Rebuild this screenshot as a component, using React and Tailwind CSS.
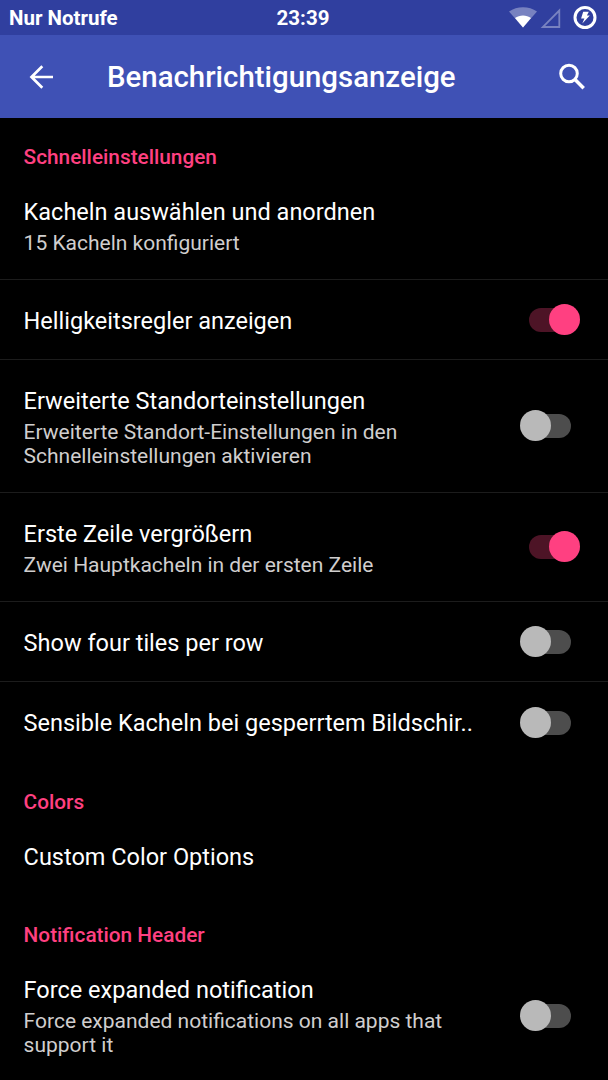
const sections = [
  {
    title: 'Schnelleinstellungen',
    items: [
      { title: 'Kacheln auswählen und anordnen', summary: ['15 Kacheln konfiguriert'], height: 'h-[109px]' },
      { title: 'Helligkeitsregler anzeigen', enabled: true, height: 'h-[80px]' },
      {
        title: 'Erweiterte Standorteinstellungen',
        summary: ['Erweiterte Standort-Einstellungen in den', 'Schnelleinstellungen aktivieren'],
        enabled: false,
        height: 'h-[133.4px]',
      },
      { title: 'Erste Zeile vergrößern', summary: ['Zwei Hauptkacheln in der ersten Zeile'], enabled: true, height: 'h-[109px]' },
      { title: 'Show four tiles per row', enabled: false, height: 'h-[80px]' },
      { title: 'Sensible Kacheln bei gesperrtem Bildschir..', enabled: false, height: 'h-[80.6px]' },
    ],
  },
  {
    title: 'Colors',
    items: [{ title: 'Custom Color Options', height: 'h-[80px]' }],
  },
  {
    title: 'Notification Header',
    items: [
      {
        title: 'Force expanded notification',
        summary: ['Force expanded notifications on all apps that', 'support it'],
        enabled: false,
        height: 'h-[134px]',
      },
    ],
  },
];

function StatusBar() {
  return (
    <div className="grid h-[35px] grid-cols-3 items-center bg-[#303f9f] pl-[9px] pr-[11px] text-[20.5px] font-bold leading-none">
      <span className="whitespace-nowrap pt-0.5">Nur Notrufe</span>
      <span className="pt-0.5 text-center">23:39</span>
      <div className="flex items-center justify-end">
        {/* WLAN */}
        <svg className="h-[22px] w-[28px]" viewBox="0 0 28 22">
          <path d="M0 4.500C8-1.200 20-1.200 28 4.500L14 20.500Z" fill="#fff" fillOpacity=".35" />
          <path d="M6 11C10.500 7.500 17.500 7.500 22 11L14 20.500Z" fill="#fff" />
        </svg>
        {/* Mobilfunk */}
        <svg className="ml-[3px] h-[22px] w-[21px]" viewBox="0 0 21 22">
          <path d="M19.300 3.500V20H2.800Z" fill="none" stroke="#fff" strokeOpacity=".35" strokeWidth="1.800" />
        </svg>
        {/* Akku */}
        <svg className="ml-[12px] h-[24px] w-[24px]" viewBox="0 0 24 24">
          <circle cx="12" cy="11.500" r="10" fill="none" stroke="#fff" strokeWidth="3" />
          <path d="M10.200 5.700H15.800L13.900 9.500H16.800L9.300 17.500L11.400 12.500H8.100Z" fill="#fff" />
        </svg>
      </div>
    </div>
  );
}

function Toolbar() {
  return (
    <header className="flex h-[83px] items-center bg-[#3f51b5] pl-[29px] pr-[22px]">
      <svg className="h-[26px] w-[26px] shrink-0" viewBox="0 0 26 26" fill="none" stroke="#fff" strokeWidth="2.700">
        <path d="M24 13H3M13.300 2.200L2.500 13L13.300 23.800" />
      </svg>
      <h1 className="ml-[52px] flex-1 whitespace-nowrap pt-px text-[29.400px] font-medium leading-9">Benachrichtigungsanzeige</h1>
      <svg className="h-[28px] w-[28px] shrink-0" viewBox="0 0 28 28" fill="none" stroke="#fff">
        <circle cx="11" cy="10.500" r="8.300" strokeWidth="3" />
        <path d="M17 16.500L25.700 25.200" strokeWidth="3.500" />
      </svg>
    </header>
  );
}

function Switch({ on }) {
  return (
    <div className={`relative h-6 w-[42px] shrink-0 rounded-full ${on ? 'bg-[#4d1426]' : 'bg-[#4d4d4d]'}`}>
      <span
        className={`absolute -top-1 size-[31px] rounded-full ${on ? '-right-[9px] bg-[#ff4081]' : '-left-[9.5px] bg-[#b9b9b9]'}`}
      />
    </div>
  );
}

function Preference({ item, divider }) {
  return (
    <div className={`flex pl-[23.600px] pr-[37px] ${item.height} ${divider ? 'border-b border-[#1c1c1c]' : ''}`}>
      <div className="flex-1 whitespace-nowrap pt-[27px]">
        <div className="text-[23.500px] leading-7">{item.title}</div>
        {item.summary && (
          <div className="mt-[4.6px] text-[21px] leading-[24.400px] text-[#d0cece]">
            {item.summary.map((line) => (
              <div key={line}>{line}</div>
            ))}
          </div>
        )}
      </div>
      {item.enabled !== undefined && (
        <div className="flex items-center">
          <Switch on={item.enabled} />
        </div>
      )}
    </div>
  );
}

export default function App() {
  return (
    <div className="h-[1080px] w-[608px] overflow-hidden bg-black font-[Roboto,sans-serif] text-white">
      <StatusBar />
      <Toolbar />
      <main>
        {sections.map((section) => (
          <section key={section.title}>
            <h2 className="h-[53px] pl-[23.600px] pt-[27px] text-[20.800px] font-medium leading-6 text-[#ff4081]">{section.title}</h2>
            {section.items.map((item, i) => (
              <Preference key={item.title} item={item} divider={i < section.items.length - 1} />
            ))}
          </section>
        ))}
      </main>
    </div>
  );
}
